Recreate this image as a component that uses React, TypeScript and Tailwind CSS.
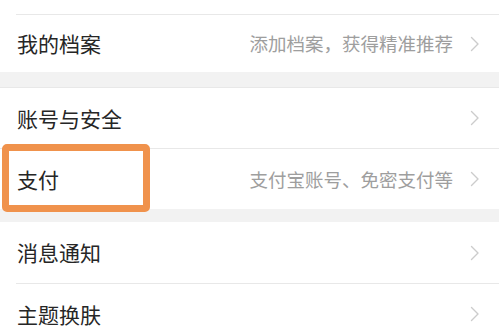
import React from "react";

function Chevron() {
  return (
    <svg width="10" height="16" viewBox="0 0 10 16" className="shrink-0">
      <path d="M1.5 1.5 L8 8 L1.5 14.5" fill="none" stroke="#cccccc" strokeWidth="1.4" strokeLinecap="round" strokeLinejoin="round" />
    </svg>
  );
}

function Row({ title, sub, divider, highlight, h = "h-[60px]" }: { title: string; sub?: string; divider?: boolean; highlight?: boolean; h?: string }) {
  return (
    <div className="relative bg-white">
      <div className={`flex items-center ${h} pl-[17px] pr-[19px]`}>
        <span className="text-[21px] text-[#262626] leading-none">{title}</span>
        <div className="ml-auto flex items-center gap-[17px]">
          {sub && <span className="text-[18.5px] text-[#9e9e9e] leading-none">{sub}</span>}
          <Chevron />
        </div>
      </div>
      {divider && <div className="ml-[16px] h-px bg-[#e8e8e8]" />}
      {highlight && (
        <div className="absolute left-[2px] top-[-5px] w-[148px] h-[68px] border-[7px] border-[#f0924c] rounded-[5px]" />
      )}
    </div>
  );
}

export default function App() {
  return (
    <div className="w-[499px] h-[329px] overflow-hidden bg-white" style={{ fontFamily: '"Noto Sans CJK SC", "Noto Sans", sans-serif' }}>
      <div className="h-[14px] bg-white" />
      <div className="ml-[16px] h-px bg-[#e8e8e8]" />
      <Row title="我的档案" sub="添加档案，获得精准推荐" h="h-[57px]" />
      <div className="h-[15px] bg-[#f2f2f2]" />
      <div className="h-px bg-[#e8e8e8]" />
      <Row title="账号与安全" h="h-[60px]" />
      <div className="h-px bg-[#e8e8e8]" />
      <Row title="支付" sub="支付宝账号、免密支付等" h="h-[60px]" highlight />
      <div className="h-[13px] bg-[#f2f2f2]" />
      <Row title="消息通知" divider h="h-[61px]" />
      <Row title="主题换肤" h="h-[60px]" />
    </div>
  );
}
